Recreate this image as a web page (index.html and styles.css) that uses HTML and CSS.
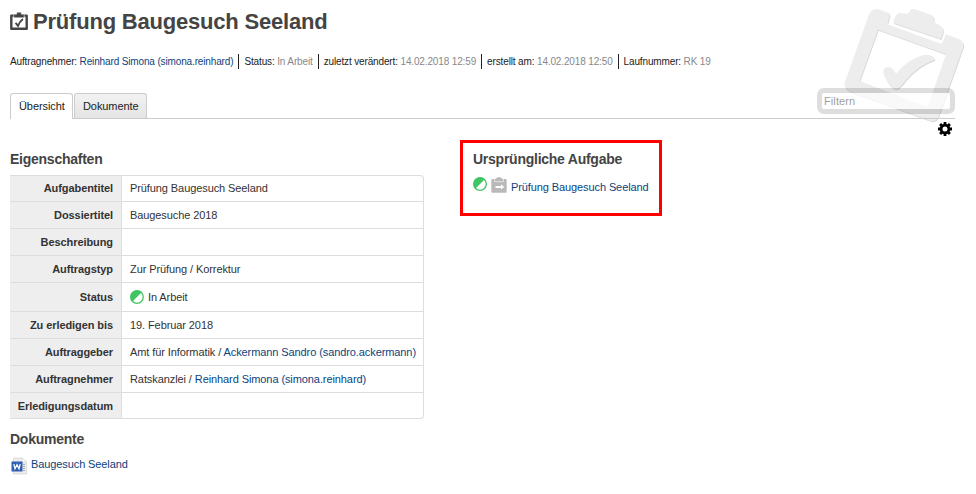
FILE: index.html
```html
<!DOCTYPE html>
<html lang="de">
<head>
<meta charset="utf-8">
<title>Prüfung Baugesuch Seeland</title>
<link rel="stylesheet" href="styles.css">
</head>
<body>
<svg class="watermark" viewBox="0 0 528 435" aria-hidden="true">
  <defs>
    <g id="board">
      <path fill-rule="evenodd" d="M235 28 L264 38 Q271 41 269 48 L262 73 L418 130 Q426 132 430 123 L437 103 L475 116 Q495 126 489 143 L416 349 Q408 367 390 362 L151 275 Q130 265 134 248 L207 43 Q214 25 235 28Z M234 89 L179 243 L383 321 L438 163Z"/>
      <path d="M280 69 Q285 44 297 39 L322 41 Q329 39 331 30 Q336 25 345 28 L396 46 Q404 50 401 65 L422 78 Q432 84 429 96 L423 117Z"/>
      <path d="M250 218 Q250 200 265 201 Q278 201 287 223 Q319 180 370 165 Q400 162 404 179 Q354 197 317 241 Q298 269 286 267 Q268 265 250 218Z"/>
    </g>
  </defs>
  <use class="wm-shadow" href="#board" transform="translate(2 3)"/>
  <use class="wm-face" href="#board"/>
</svg>
<header class="head">
  <svg class="title-icon" viewBox="0 0 18 18" aria-hidden="true">
    <path fill="none" stroke="#444" stroke-width="2.400" stroke-linejoin="round" d="M1.300 3.600h15.400v13.200H1.300z"/>
    <path fill="#444" stroke="#fff" stroke-width=".5" d="M3.800 5.800V2.200h2.900V.200h4.600v2h2.900v3.600z"/>
    <path fill="none" stroke="#444" stroke-width="1.900" d="M5.600 10.800l2.400 3c1-2.500 2.500-4.900 4.900-6.800"/>
  </svg>
  <h1>Prüfung Baugesuch Seeland</h1>
</header>
<div class="byline">
  <span>Auftragnehmer: <a href="#">Reinhard Simona (simona.reinhard)</a></span>
  <span>Status: <i>In Arbeit</i></span>
  <span>zuletzt verändert: <i>14.02.2018 12:59</i></span>
  <span>erstellt am: <i>14.02.2018 12:50</i></span>
  <span>Laufnummer: <i>RK 19</i></span>
</div>
<nav class="tabs">
  <a class="tab active" href="#">Übersicht</a>
  <a class="tab" href="#">Dokumente</a>
  <div class="filter"><input type="text" placeholder="Filtern"></div>
</nav>
<div class="tools">
  <svg class="gear" viewBox="-8 -8 16 16" aria-hidden="true">
    <circle r="3.900" fill="none" stroke="#000" stroke-width="2.800"/>
    <path stroke="#000" stroke-width="2.800" d="M0-7V-4M0 4v3M-7 0H-4M4 0h3M-4.900-4.900L-3-3M3 3l1.900 1.900M-4.900 4.900L-3 3M3-3l1.900-1.900"/>
  </svg>
</div>
<main class="content">
  <section class="left">
    <h2>Eigenschaften</h2>
    <table class="props">
      <tr><th>Aufgabentitel</th><td>Prüfung Baugesuch Seeland</td></tr>
      <tr><th>Dossiertitel</th><td>Baugesuche 2018</td></tr>
      <tr><th>Beschreibung</th><td></td></tr>
      <tr><th>Auftragstyp</th><td>Zur Prüfung / Korrektur</td></tr>
      <tr class="status"><th>Status</th><td><div class="state"><svg class="half" viewBox="0 0 14 14"><circle cx="7" cy="7" r="6.300" fill="#fff" stroke="#3fc564" stroke-width="1.300"/><path fill="#3fc564" d="M2.200 11.800A6.800 6.800 0 0 1 11.800 2.200z"/></svg>In Arbeit</div></td></tr>
      <tr><th>Zu erledigen bis</th><td>19. Februar 2018</td></tr>
      <tr><th>Auftraggeber</th><td>Amt für Informatik / <a href="#">Ackermann Sandro (sandro.ackermann)</a></td></tr>
      <tr><th>Auftragnehmer</th><td>Ratskanzlei / <a href="#">Reinhard Simona (simona.reinhard)</a></td></tr>
      <tr class="last"><th>Erledigungsdatum</th><td></td></tr>
    </table>
    <h2 class="docs-title">Dokumente</h2>
    <div class="doc">
      <svg class="word" viewBox="0 0 16 18" aria-hidden="true">
        <path fill="#ececec" stroke="#d2d2d2" stroke-width=".7" d="M2.500 1H11l4.500 4v12h-13z"/>
        <path fill="#fff" stroke="#ccc" stroke-width=".5" d="M11 1v4h4.500z"/>
        <path stroke="#a9b0bd" d="M12 7.500h2M12 9.500h2M12 11.500h2M12 13.500h2"/>
        <path fill="#2f5fb3" d="M.5 4.500h11v10H.5z"/>
        <path fill="none" stroke="#fff" stroke-width="1.300" d="M2.800 7.200l1.200 4.500L6 7.700l2 4 1.200-4.500"/>
      </svg>
      <a href="#">Baugesuch Seeland</a>
    </div>
  </section>
  <section class="origin">
    <h2>Ursprüngliche Aufgabe</h2>
    <div class="task">
      <svg class="half" viewBox="0 0 14 14"><circle cx="7" cy="7" r="6.300" fill="#fff" stroke="#3fc564" stroke-width="1.300"/><path fill="#3fc564" d="M2.200 11.800A6.800 6.800 0 0 1 11.800 2.200z"/></svg>
      <svg class="clip" viewBox="0 0 16 16"><path fill="#b9b9b9" d="M1.500 2H4.500L6.500.3h3L11.500 2h3q1.200 0 1.200 1.200v11.200q0 1.300-1.200 1.300h-13Q.3 15.700.3 14.400V3.200Q.3 2 1.500 2z"/><path fill="none" stroke="#e6e6e6" stroke-width=".9" d="M3.500 2v2.700h9V2"/><path fill="#fff" d="M4.500 8.900H10V7.200l3.300 2.700-3.300 2.700v-1.700H4.500z"/></svg>
      <a href="#">Prüfung Baugesuch Seeland</a>
    </div>
  </section>
</main>
</body>
</html>
```
FILE: styles.css
```css
* { box-sizing: border-box; }
body {
  margin: 0;
  padding: 0 21px 0 10px;
  height: 494px;
  position: relative;
  overflow: hidden;
  background: #fff;
  color: #333;
  font: 11px/14px "Liberation Sans", Arial, sans-serif;
}
a { color: #0b437e; text-decoration: none; }
h1, h2 { margin: 0; color: #444; font-weight: bold; }
h1 { font-size: 22px; line-height: 26px; letter-spacing: -.2px; }
h2 { font-size: 14px; line-height: 16px; letter-spacing: -.25px; }
.watermark { position: absolute; left: 800px; top: 0; width: 176px; height: 145px; }
.wm-shadow { fill: #d8d8d8; }
.wm-face { fill: #ededed; }
.head { display: flex; padding-top: 9px; height: 54px; gap: 5px; }
.title-icon { width: 18px; height: 18px; margin-top: 3px; }
.byline { display: flex; height: 15px; font-size: 10px; line-height: 15px; letter-spacing: -.14px; color: #222; white-space: nowrap; }
.byline span + span { border-left: 1px solid #222; margin-left: 5px; padding-left: 5px; }
.byline i { font-style: normal; color: #888; }
.tabs {
  display: flex;
  align-items: flex-end;
  height: 50px;
  border-bottom: 1px solid #ccc;
  position: relative;
}
.tab {
  width: 73px;
  height: 25px;
  padding: 0 8px;
  border: 1px solid #ccc;
  border-bottom: 0;
  border-radius: 3px 3px 0 0;
  line-height: 25px;
  letter-spacing: -.08px;
  color: #222;
  background: linear-gradient(#f2f2f2, #e4e4e4);
}
.tab.active { width: 63px; background: #fff; height: 26px; margin: 0 1px -1px 0; }
.filter {
  display: flex;
  width: 138px;
  height: 26px;
  margin: 0 0 4px auto;
  border: 5px solid rgba(0, 0, 0, .13);
  border-radius: 7px;
  background: rgba(255, 255, 255, .65);
  background-clip: padding-box;
}
.filter input {
  width: 100%;
  padding: 0 2px;
  border: 0;
  outline: 0;
  background: transparent;
  font: 11px "Liberation Sans", Arial, sans-serif;
}
.filter input::placeholder { color: #a0a0a0; letter-spacing: .1px; }
.tools { display: flex; justify-content: flex-end; height: 32px; padding: 2px 2px 0 0; }
.gear { width: 16px; height: 16px; flex: none; }
.content { display: flex; align-items: flex-start; }
.left { width: 450px; }
.props {
  width: 414px;
  height: 244px;
  table-layout: fixed;
  margin-top: 8px;
  border: 1px solid #ddd;
  border-left: 0;
  border-radius: 0 4px 4px 0;
  border-spacing: 0;
  letter-spacing: -.09px;
}
.props th, .props td { height: 27px; padding: 0 7px; border-bottom: 1px solid #ddd; }
.props th { width: 112px; padding: 0 8px 0 0; border-right: 1px solid #ddd; background: #eee; text-align: right; white-space: nowrap; letter-spacing: -.08px; }
.props td { padding-left: 8px; white-space: nowrap; }
.props tr:first-child > * { height: 26px; padding-bottom: 1px; }
.props .status > * { height: 29px; }
.props .last > * { height: 25px; border-bottom: 0; }
.state { display: flex; align-items: center; gap: 4px; }
.half { width: 14px; height: 14px; flex: none; }
.docs-title { margin-top: 12px; }
.doc { display: flex; align-items: flex-start; gap: 4px; margin-top: 10px; padding-left: 1px; letter-spacing: -.1px; }
.word { width: 16px; height: 18px; }
.origin {
  width: 202px;
  height: 76px;
  margin-top: -11px;
  padding: 8px 10px;
  border: 3px solid #fe0000;
}
.task { display: flex; margin-top: 10px; letter-spacing: -.1px; }
.clip { width: 16px; height: 16px; flex: none; margin: 0 4px 0 4px; }
.task a { padding-top: 3px; white-space: nowrap; }
```
